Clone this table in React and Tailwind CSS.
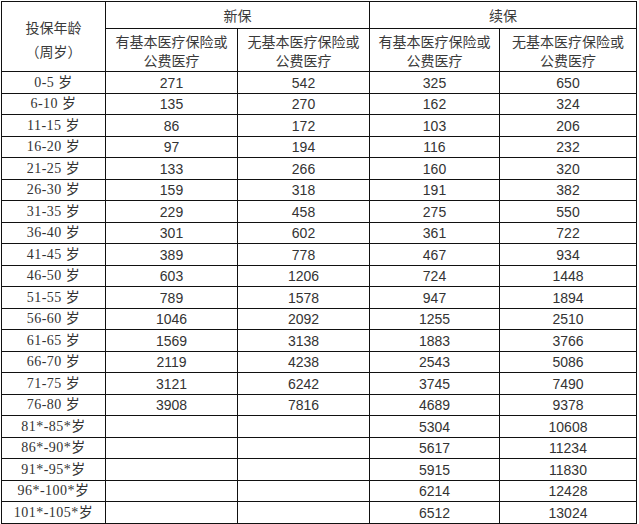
import React from 'react';

const rows = [
  ['0-5 岁', '271', '542', '325', '650'],
  ['6-10 岁', '135', '270', '162', '324'],
  ['11-15 岁', '86', '172', '103', '206'],
  ['16-20 岁', '97', '194', '116', '232'],
  ['21-25 岁', '133', '266', '160', '320'],
  ['26-30 岁', '159', '318', '191', '382'],
  ['31-35 岁', '229', '458', '275', '550'],
  ['36-40 岁', '301', '602', '361', '722'],
  ['41-45 岁', '389', '778', '467', '934'],
  ['46-50 岁', '603', '1206', '724', '1448'],
  ['51-55 岁', '789', '1578', '947', '1894'],
  ['56-60 岁', '1046', '2092', '1255', '2510'],
  ['61-65 岁', '1569', '3138', '1883', '3766'],
  ['66-70 岁', '2119', '4238', '2543', '5086'],
  ['71-75 岁', '3121', '6242', '3745', '7490'],
  ['76-80 岁', '3908', '7816', '4689', '9378'],
  ['81*-85*岁', '', '', '5304', '10608'],
  ['86*-90*岁', '', '', '5617', '11234'],
  ['91*-95*岁', '', '', '5915', '11830'],
  ['96*-100*岁', '', '', '6214', '12428'],
  ['101*-105*岁', '', '', '6512', '13024'],
];

const cell = 'border border-[#111] p-0 text-center align-middle';
const cjk = "font-['Noto_Sans_CJK_SC',sans-serif] text-[#3a3a3a]";
const age = "font-['Liberation_Serif','Noto_Sans_CJK_SC',serif] tracking-[0.5px]";
const num = "font-['Liberation_Sans','Noto_Sans_CJK_SC',sans-serif]";

const SubHead = () => (
  <>
    有基本医疗保险或
    <br />
    公费医疗
  </>
);

const SubHead2 = () => (
  <>
    无基本医疗保险或
    <br />
    公费医疗
  </>
);

export default function App() {
  return (
    <div className="w-[639px] h-[524px] bg-white pt-px pl-px text-[#333] text-[14px]">
      <table className="table-fixed border-collapse w-[636px]">
        <colgroup>
          <col className="w-[104px]" />
          <col className="w-[132px]" />
          <col className="w-[132px]" />
          <col className="w-[130px]" />
          <col className="w-[137px]" />
        </colgroup>
        <thead>
          <tr className="h-[27px]">
            <td rowSpan={2} className={`${cell} ${cjk} leading-[24px] pt-1`}>
              投保年龄
              <br />
              （周岁）
            </td>
            <td colSpan={2} className={`${cell} ${cjk} leading-[20px]`}>
              新保
            </td>
            <td colSpan={2} className={`${cell} ${cjk} leading-[20px]`}>
              续保
            </td>
          </tr>
          <tr className="h-[43px]">
            <td className={`${cell} ${cjk} leading-[19px] pt-0.5`}>
              <SubHead />
            </td>
            <td className={`${cell} ${cjk} leading-[19px] pt-0.5`}>
              <SubHead2 />
            </td>
            <td className={`${cell} ${cjk} leading-[19px] pt-0.5`}>
              <SubHead />
            </td>
            <td className={`${cell} ${cjk} leading-[19px] pt-0.5`}>
              <SubHead2 />
            </td>
          </tr>
        </thead>
        <tbody>
          {rows.map((r, i) => (
            <tr key={r[0]} className={i % 2 === 0 ? 'h-[22px]' : 'h-[21px]'}>
              <td className={`${cell} ${age} leading-[18px]`}>{r[0]}</td>
              <td className={`${cell} ${num} leading-[18px]`}>{r[1]}</td>
              <td className={`${cell} ${num} leading-[18px]`}>{r[2]}</td>
              <td className={`${cell} ${num} leading-[18px]`}>{r[3]}</td>
              <td className={`${cell} ${num} leading-[18px]`}>{r[4]}</td>
            </tr>
          ))}
        </tbody>
      </table>
    </div>
  );
}
